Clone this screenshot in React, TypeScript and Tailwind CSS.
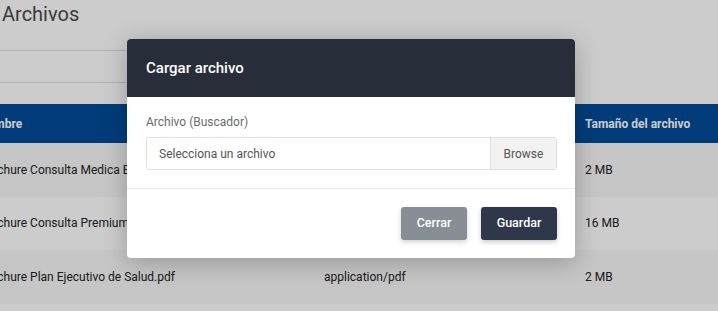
import React from "react";

const rows = [
  { name: "Brochure Consulta Medica Básica.pdf", type: "application/pdf", size: "2 MB" },
  { name: "Brochure Consulta Premium.pdf", type: "application/pdf", size: "16 MB" },
  { name: "Brochure Plan Ejecutivo de Salud.pdf", type: "application/pdf", size: "2 MB" },
  { name: "Brochure Plan Familiar.pdf", type: "application/pdf", size: "3 MB" },
];

export default function App() {
  return (
    <div
      className="relative w-[718px] h-[311px] overflow-hidden bg-white"
      style={{ fontFamily: "Roboto, 'Liberation Sans', sans-serif" }}
    >
      {/* Page */}
      <div className="ml-[-33px] w-[800px]">
        <h1 className="pl-[35px] pt-[1px] h-[50px] text-[20px] leading-[26px] text-[#4a4a4a] font-normal">
          Archivos
        </h1>
        <div className="w-[400px] h-[33px] border-y border-[#dedede]" />
        <div className="h-[21px]" />
        <div className="flex h-[39px] items-center bg-[#004c98] text-white text-[12px] font-bold">
          <div className="w-[357px] pl-[12px]">Nombre</div>
          <div className="w-[261px]">Tipo de archivo</div>
          <div>Tamaño del archivo</div>
        </div>
        {rows.map((r, i) => (
          <div
            key={i}
            className={`flex h-[53.5px] items-center text-[12px] text-[#222] ${
              i % 2 === 0 ? "bg-[#f8f8f8]" : "bg-white"
            }`}
          >
            <div className="w-[357px] pl-[12px] whitespace-nowrap overflow-hidden">{r.name}</div>
            <div className="w-[261px]">{r.type}</div>
            <div>{r.size}</div>
          </div>
        ))}
      </div>

      {/* Overlay */}
      <div className="absolute inset-0 bg-black/20" />

      {/* Modal */}
      <div className="absolute left-[127px] top-[39px] w-[448px] rounded-[4px] bg-white overflow-hidden shadow-[0_4px_24px_rgba(0,0,0,0.25)]">
        <div className="h-[58px] bg-[#272e3a] flex items-center pl-[19px]">
          <span className="text-white text-[15px] font-medium">Cargar archivo</span>
        </div>
        <div className="pl-[19px] pr-[18px] pt-[15px] pb-[18px]">
          <div className="text-[12px] leading-[20px] text-[#6b6b6b] mb-[5px]">Archivo (Buscador)</div>
          <div className="flex h-[33px] border border-[#e0e0e0] rounded-[3px] overflow-hidden">
            <div className="flex-1 flex items-center pl-[12px] text-[12px] text-[#555]">
              Selecciona un archivo
            </div>
            <div className="w-[66px] flex items-center justify-center bg-[#f2f2f2] border-l border-[#e0e0e0] text-[12px] text-[#555]">
              Browse
            </div>
          </div>
        </div>
        <div className="border-t border-[#ebebeb] flex justify-end gap-[14px] pr-[18px] pt-[18px] pb-[18px]">
          <button className="w-[66px] h-[33px] rounded-[3px] bg-[#878e96] text-white text-[12.5px] font-medium shadow-[0_2px_5px_rgba(0,0,0,0.18)]">
            Cerrar
          </button>
          <button className="w-[76px] h-[33px] rounded-[3px] bg-[#2f384a] text-white text-[12.5px] font-medium shadow-[0_2px_5px_rgba(0,0,0,0.22)]">
            Guardar
          </button>
        </div>
      </div>
    </div>
  );
}
